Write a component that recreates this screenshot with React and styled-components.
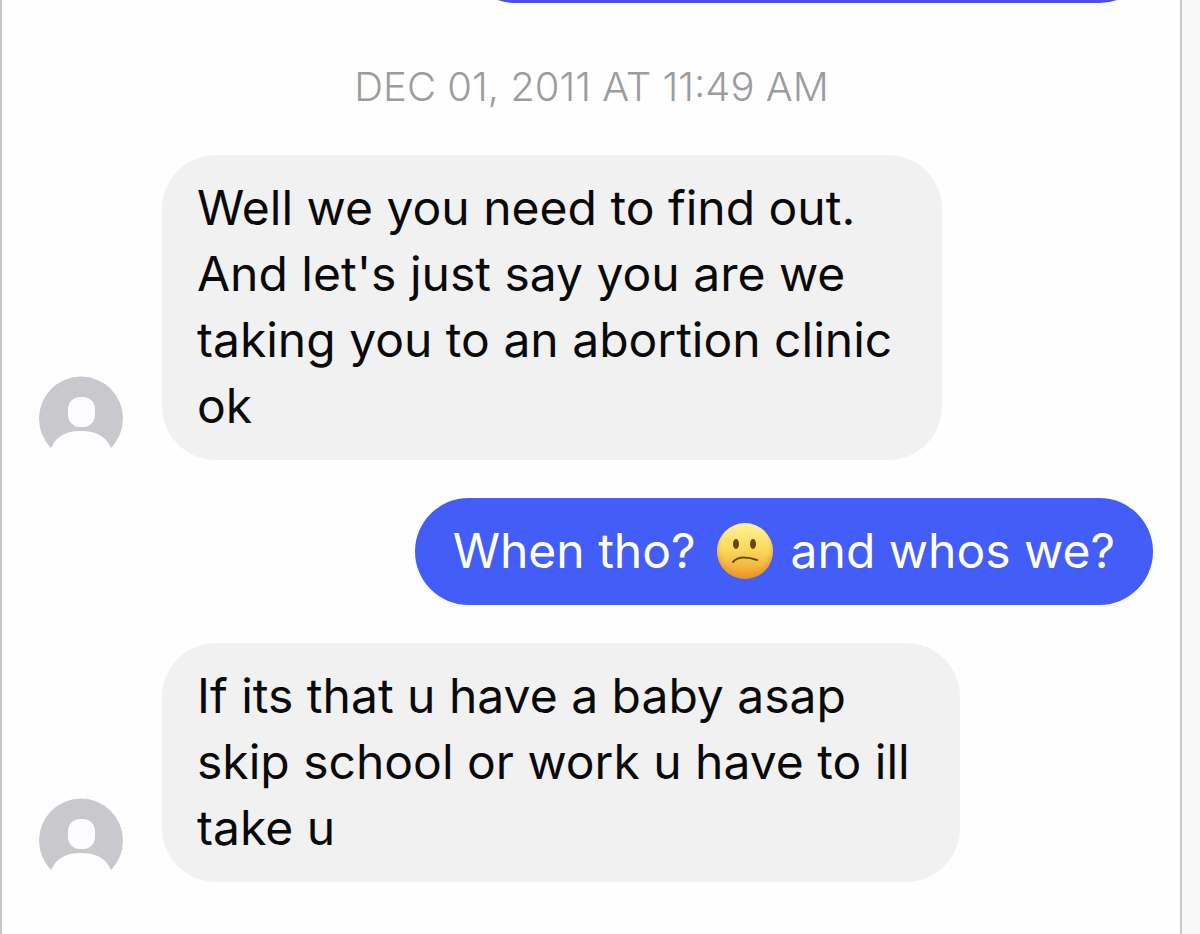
import React from "react";
import styled, { createGlobalStyle } from "styled-components";

const GlobalStyle = createGlobalStyle`
  * { box-sizing: border-box; }
  body {
    margin: 0;
    background: #f8f8f9;
    font-family: Inter, "Liberation Sans", sans-serif;
  }
`;

const Screen = styled.main`
  height: 100vh;
  margin-right: 18px;
  overflow: hidden;
  background: #fefefe;
  border-left: 2px solid #c6c6c8;
  border-right: 2px solid #c9c9cb;
`;

const Thread = styled.div`
  display: flex;
  flex-direction: column;
  gap: 38px;
  padding: 0 27px 0 36px;
`;

const EarlierMessage = styled.div`
  align-self: flex-end;
  width: 62%;
  height: 107px;
  margin-top: -104px;
  border-radius: 54px;
  background: #4a4df5;
`;

const Timestamp = styled.time`
  display: block;
  margin: 24px 0 8px;
  padding-right: 8px;
  color: #9c9c9e;
  font-size: 40px;
  font-weight: 300;
  line-height: 44px;
  text-align: center;
`;

const Row = styled.div`
  display: flex;
  align-items: flex-end;
  justify-content: ${(p) => (p.$sent ? "flex-end" : "flex-start")};
  gap: 38px;
`;

const Bubble = styled.p`
  margin: 0;
  padding: ${(p) => (p.$sent ? "20px 38px 21px" : "20px 50px 21px 35px")};
  border-radius: 54px;
  background: ${(p) => (p.$sent ? "#425df8" : "#f1f1f2")};
  color: ${(p) => (p.$sent ? "#fff" : "#0a0a0a")};
  font-size: 48px;
  line-height: 66px;
  white-space: pre-line;
`;

const Avatar = styled.svg`
  flex: none;
  width: 86px;
  height: 86px;
`;

const Emoji = styled.svg`
  width: 58px;
  height: 58px;
  margin: 0 3px 0 7px;
  vertical-align: -12px;
`;

function PersonAvatar() {
  return (
    <Avatar viewBox="0 0 86 86" role="img" aria-label="Sender">
      <path
        d="M13 74 A42 42 0 1 1 73 74 C67 61 57 57 43 57 C29 57 19 61 13 74 Z"
        fill="#c9c8cd"
      />
      <rect x="30" y="23" width="27" height="30" rx="12" fill="#fdfcff" />
    </Avatar>
  );
}

function ConfusedFace() {
  return (
    <Emoji viewBox="0 0 58 58" role="img" aria-label="confused face">
      <defs>
        <linearGradient id="skin" x1="0" y1="0" x2="0" y2="1">
          <stop offset="0" stopColor="#fff29a" />
          <stop offset="0.5" stopColor="#fbd757" />
          <stop offset="1" stopColor="#ee9a2b" />
        </linearGradient>
        <radialGradient id="rim" cx="0.5" cy="0.42" r="0.58">
          <stop offset="0.72" stopColor="#f09a28" stopOpacity="0" />
          <stop offset="1" stopColor="#e88a22" stopOpacity="0.7" />
        </radialGradient>
      </defs>
      <circle cx="29" cy="29" r="28" fill="url(#skin)" />
      <circle cx="29" cy="29" r="28" fill="url(#rim)" />
      <ellipse cx="20" cy="22" rx="3" ry="5" fill="#6b4515" />
      <ellipse cx="37" cy="22" rx="3" ry="5" fill="#6b4515" />
      <path
        d="M17 40 C22 34 32 35 41 38"
        fill="none"
        stroke="#6b4515"
        strokeWidth="2"
        strokeLinecap="round"
      />
    </Emoji>
  );
}

function Received({ children }) {
  return (
    <Row>
      <PersonAvatar />
      <Bubble>{children}</Bubble>
    </Row>
  );
}

export default function App() {
  return (
    <>
      <GlobalStyle />
      <Screen>
        <Thread>
          <EarlierMessage aria-hidden="true" />
          <Timestamp dateTime="2011-12-01T11:49">
            DEC 01, 2011 AT 11:49 AM
          </Timestamp>
          <Received>
            {"Well we you need to find out.\nAnd let's just say you are we\ntaking you to an abortion clinic\nok"}
          </Received>
          <Row $sent>
            <Bubble $sent>
              When tho? <ConfusedFace /> and whos we?
            </Bubble>
          </Row>
          <Received>
            {"If its that u have a baby asap\nskip school or work u have to ill\ntake u"}
          </Received>
        </Thread>
      </Screen>
    </>
  );
}
